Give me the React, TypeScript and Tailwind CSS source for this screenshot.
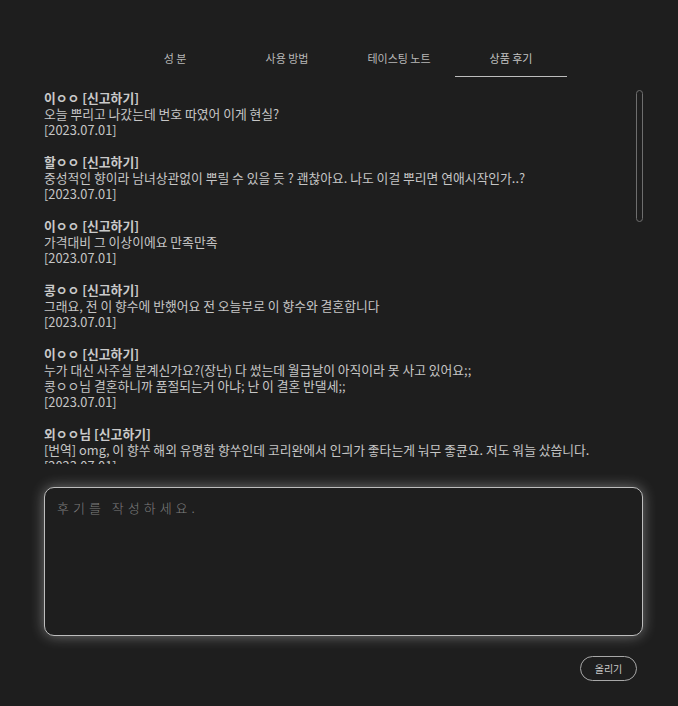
import { useState } from "react";

const tabs = ["성 분", "사용 방법", "테이스팅 노트", "상품 후기"];

const reviews: { name: string; lines: string[]; date: string }[] = [
  { name: "이ㅇㅇ", lines: ["오늘 뿌리고 나갔는데 번호 따였어 이게 현실?"], date: "2023.07.01" },
  {
    name: "할ㅇㅇ",
    lines: ["중성적인 향이라 남녀상관없이 뿌릴 수 있을 듯 ? 괜찮아요. 나도 이걸 뿌리면 연애시작인가..?"],
    date: "2023.07.01",
  },
  { name: "이ㅇㅇ", lines: ["가격대비 그 이상이에요 만족만족"], date: "2023.07.01" },
  { name: "콩ㅇㅇ", lines: ["그래요, 전 이 향수에 반했어요 전 오늘부로 이 향수와 결혼합니다"], date: "2023.07.01" },
  {
    name: "이ㅇㅇ",
    lines: [
      "누가 대신 사주실 분계신가요?(장난) 다 썼는데 월급날이 아직이라 못 사고 있어요;;",
      "콩ㅇㅇ님 결혼하니까 품절되는거 아냐; 난 이 결혼 반댈세;;",
    ],
    date: "2023.07.01",
  },
  {
    name: "외ㅇㅇ님",
    lines: ["[번역] omg, 이 향쑤 해외 유명환 향쑤인데 코리완에서 인긔가 좋타는게 눠무 좋큔요. 저도 워늘 샀씁니다."],
    date: "2023.07.01",
  },
  { name: "김ㅇㅇ", lines: ["향이 오래가서 좋아요. 재구매 의사 있습니다."], date: "2023.06.30" },
  { name: "박ㅇㅇ", lines: ["선물용으로 샀는데 포장도 예쁘고 반응 좋았어요"], date: "2023.06.29" },
];

export default function App() {
  const [active, setActive] = useState(3);
  const [text, setText] = useState("");

  return (
    <div
      className="min-h-[706px] w-full bg-[#1e1e1e] text-[#c6c6c6]"
      style={{ fontFamily: '"Noto Sans CJK KR", "Noto Sans", sans-serif' }}
    >
      <div className="pt-[40px] pl-[119px] flex">
        {tabs.map((t, i) => (
          <button
            key={t}
            onClick={() => setActive(i)}
            className={
              i === active
                ? "w-[112px] h-[37px] flex items-center justify-center text-[11px] text-[#c4c4c4] border-b border-[#bdbdbd]"
                : "w-[112px] h-[37px] flex items-center justify-center text-[11px] text-[#b8b8b8] border-b border-transparent"
            }
          >
            {t}
          </button>
        ))}
      </div>

      <div className="ml-[44px] w-[600px]">
        {/* review list, scrollbar drawn over it */}
        <div className="relative mt-[13px]">
          <div className="h-[374px] overflow-hidden pr-[12px] text-[12.8px] leading-[16px]">
            {reviews.map((r, i) => (
              <div key={i} className="mb-[16px]">
                <div className="font-semibold text-[#cacaca]">
                  {r.name} [신고하기]
                </div>
                {r.lines.map((l, j) => (
                  <div key={j}>{l}</div>
                ))}
                <div>[{r.date}]</div>
              </div>
            ))}
          </div>
          <div className="absolute right-[1px] top-0 w-[7px] h-[132px] rounded-full border border-[#6e6e6e]" />
        </div>

        <textarea
          value={text}
          onChange={(e) => setText(e.target.value)}
          placeholder="후기를 작성하세요."
          className="mt-[23px] block w-[599px] h-[149px] resize-none rounded-[10px] border border-[#bdbdbd] bg-[#1e1e1e] px-[12px] py-[10px] text-[13px] tracking-[4px] font-light text-[#c6c6c6] placeholder:text-[#7e7e7e] outline-none shadow-[0_0_14px_rgba(255,255,255,0.38)]"
        />

        <div className="flex justify-end pr-[7px] mt-[20px]">
          <button className="w-[57px] h-[25px] rounded-full border border-[#a8a8a8] text-[10px] text-[#c8c8c8]">
            올리기
          </button>
        </div>
      </div>
    </div>
  );
}
